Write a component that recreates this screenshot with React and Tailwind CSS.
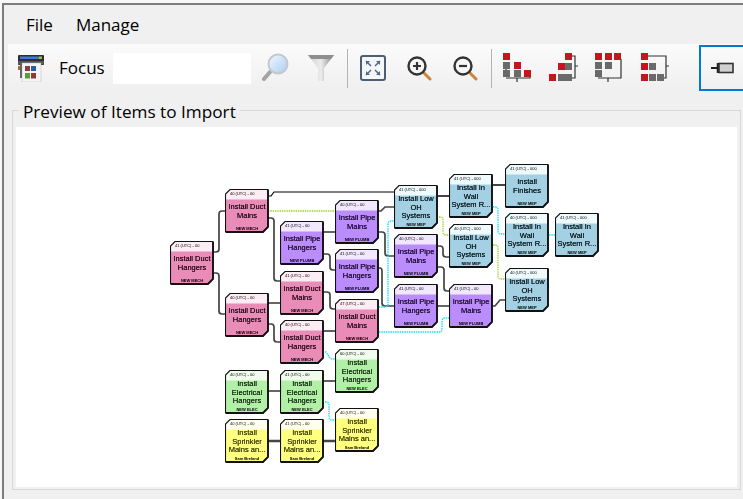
import React from "react";

const F = { fontFamily: '"Open Sans", "Noto Sans", sans-serif' };

const PAL = {
  pink: { body: "#ea8cb8", head: "#fcecf3", foot: "NEW MECH", ink: "#2e0f20" },
  purple: { body: "#bb8cfc", head: "#f1e8fd", foot: "NEW PLUMB", ink: "#231038" },
  blue: { body: "#a3d0e2", head: "#effafd", foot: "NEW MEP", ink: "#111f26" },
  green: { body: "#b2f0a8", head: "#f1fcee", foot: "NEW ELEC", ink: "#1a3016" },
  yellow: { body: "#ffff80", head: "#fffff0", foot: "Sam Breland", ink: "#45450a" },
};

const NODES = [
  [170, 241, "pink", ["Install Duct", "Hangers"], "41 (UTC) - 00"],
  [225, 189, "pink", ["Install Duct", "Mains"], "40 (UTC) - 00"],
  [225, 293, "pink", ["Install Duct", "Hangers"], "40 (UTC) - 00"],
  [280, 221, "purple", ["Install Pipe", "Hangers"], "41 (UTC) - 00"],
  [280, 271, "pink", ["Install Duct", "Mains"], "41 (UTC) - 00"],
  [280, 320, "pink", ["Install Duct", "Hangers"], "40 (UTC) - 00"],
  [335, 200, "purple", ["Install Pipe", "Mains"], "40 (UTC) - 00"],
  [335, 249, "purple", ["Install Pipe", "Hangers"], "41 (UTC) - 00"],
  [335, 299, "pink", ["Install Duct", "Mains"], "47 (UTC) - 00"],
  [394, 185, "blue", ["Install Low", "OH", "Systems"], "41 (UTC) - 000"],
  [394, 234, "purple", ["Install Pipe", "Mains"], "40 (UTC) - 00"],
  [394, 284, "purple", ["Install Pipe", "Hangers"], "41 (UTC) - 00"],
  [449, 174, "blue", ["Install In", "Wall", "System R..."], "41 (UTC) - 000"],
  [449, 224, "blue", ["Install Low", "OH", "Systems"], "40 (UTC) - 000"],
  [449, 284, "purple", ["Install Pipe", "Mains"], "41 (UTC) - 00"],
  [505, 164, "blue", ["Install", "Finishes"], "41 (UTC) - 000"],
  [505, 213, "blue", ["Install In", "Wall", "System R..."], "40 (UTC) - 000"],
  [505, 268, "blue", ["Install Low", "OH", "Systems"], "40 (UTC) - 000"],
  [555, 213, "blue", ["Install In", "Wall", "System R..."], "41 (UTC) - 000"],
  [225, 370, "green", ["Install", "Electrical", "Hangers"], "40 (UTC) - 00"],
  [280, 370, "green", ["Install", "Electrical", "Hangers"], "41 (UTC) - 00"],
  [335, 349, "green", ["Install", "Electrical", "Hangers"], "60 (UTC) - 00"],
  [225, 419, "yellow", ["Install", "Sprinkler", "Mains an..."], "40 (UTC) - 00"],
  [280, 419, "yellow", ["Install", "Sprinkler", "Mains an..."], "41 (UTC) - 00"],
  [335, 408, "yellow", ["Install", "Sprinkler", "Mains an..."], "40 (UTC) - 00"],
];

const G = { stroke: "#444", strokeWidth: 1.7 };
const K = { stroke: "#000", strokeWidth: 1.2 };
const C = { stroke: "#14e4f0", strokeWidth: 1.4, strokeDasharray: "1.5 0.8" };
const Y = { stroke: "#a0d42e", strokeWidth: 1.3, strokeDasharray: "1.5 0.8" };

const WIRES = [
  ["M213 252h3q3 0 3-3v-35q0-3 3-3h3", G],
  ["M213 273h3q3 0 3 3v35q0 3 3 3h3", G],
  ["M268 196h3l3-4h120", K],
  ["M268 211h67", Y],
  ["M268 218h3q3 0 3 3v57q0 3 3 3h3", G],
  ["M324 232h11", K],
  ["M324 254h3q3 0 3 3v10q0 3 3 3h2", G],
  ["M324 292h3q3 0 3 3v11q0 3 3 3h2", G],
  ["M268 303h12", K],
  ["M268 324h3q3 0 3 3v12q0 3 3 3h3", G],
  ["M324 331h11", G],
  ["M325 352h1l4 6q1 1 3 1h2", C],
  ["M323 381h12", G],
  ["M268 391h12", K],
  ["M325 402h1q3 0 3 3v12q0 3 3 3h3", C],
  ["M268 441h12", { ...G, strokeWidth: 2.5 }],
  ["M323 441h12", { ...G, strokeWidth: 2.5 }],
  ["M379 211h2l4-4h9", G],
  ["M379 232h3q3 0 3 3v18q0 3 3 3h6", G],
  ["M379 268h1q2 0 2 3v32q0 3 3 3h9", G],
  ["M379 332h60q3 0 3-3v-8q0-3 3-3h4", C],
  ["M379 307h6q3 0 3-3v-80q0-3 3-3h3", C],
  ["M438 196h11", { ...G, strokeWidth: 2 }],
  ["M439 217h1q3 0 3 3v12q0 3 3 3h3", Y],
  ["M438 246h2q3 0 3 3v5q0 3 3 3h3", G],
  ["M438 267h3q3 0 3 3v18q0 3 3 3h2", G],
  ["M438 306h11", K],
  ["M493 185h12", { ...G, strokeWidth: 2 }],
  ["M493 207h2q3 0 3 3v21q0 3 3 3h4", C],
  ["M493 245h2q3 0 3 3v28q0 3 3 3h4", Y],
  ["M493 306h2l5-6h5", G],
  ["M549 235h6", C],
];

function Node({ x, y, tone, title, id }) {
  const p = PAL[tone];
  return (
    <div
      className="absolute w-[44px] h-[44px]"
      style={{ left: x - 16, top: y - 127 }}
    >
      <svg className="absolute inset-0" width="44" height="44" viewBox="0 0 44 44">
        <polygon points="5,.5 43,.5 43,38 38,43 .5,43 .5,5" fill={p.body} />
        <polygon points="5,.5 43,.5 43,10.5 .5,10.5 .5,5" fill={p.head} />
        <polygon points="5,.5 43,.5 43,38 38,43 .5,43 .5,5" fill="none" stroke="#111" strokeWidth="1.1" />
        <polyline points="43,1 43,38 38,43 1,43" fill="none" stroke="#111" strokeWidth="1.8" />
      </svg>
      <div className="relative flex flex-col h-full items-center">
        <div
          className="h-[10px] w-full pl-[5px] pt-[2px] text-[4px] leading-[5px] whitespace-nowrap text-black"
          style={{ fontFamily: '"Liberation Sans", sans-serif' }}
        >
          {id}
        </div>
        <div
          className="flex-1 flex flex-col items-center justify-center text-[7.5px] leading-[8.7px] whitespace-nowrap [text-shadow:0_0_0.5px_currentColor]"
          style={{ fontFamily: '"Liberation Sans", sans-serif', color: p.ink }}
        >
          {title.map((t, i) => (
            <span key={i}>{t}</span>
          ))}
        </div>
        <div
          className="h-[8px] pt-[1px] text-[4px] leading-[5px] font-bold whitespace-nowrap text-black"
          style={{ fontFamily: '"Liberation Sans", sans-serif' }}
        >
          {p.foot}
        </div>
      </div>
    </div>
  );
}

function Logo() {
  return (
    <svg width="26" height="28" viewBox="0 0 26 28" className="blur-[0.3px]">
      <rect x="0" y="1" width="26" height="10" rx="1" fill="#2e2e2e" />
      <rect x="2" y="2.5" width="19" height="2.5" fill="#3d7ad8" />
      <rect x="21" y="2.5" width="3" height="2.5" fill="#a8c040" />
      <rect x="0" y="7" width="26" height="3" fill="#555" />
      <rect x="4" y="9" width="19" height="19" fill="#f4f4f4" stroke="#bbb" strokeWidth=".5" />
      <rect x="7" y="12" width="5" height="5" fill="#8f3a3a" />
      <rect x="13" y="12" width="5" height="5" fill="#2d5aa0" />
      <rect x="7" y="19" width="5" height="5.5" fill="#5d9a3a" />
      <rect x="13" y="19" width="5" height="5.5" fill="#8f3a3a" />
      <rect x="0" y="12" width="2" height="4" fill="#b06a30" />
      <rect x="2" y="9" width="2" height="15" fill="#666" />
    </svg>
  );
}

function Magnifier() {
  return (
    <svg width="30" height="32" viewBox="0 0 30 32" className="blur-[0.4px]">
      <defs>
        <linearGradient id="mg" x1="0" y1="0" x2="1" y2="1">
          <stop offset="0" stopColor="#f2f8ff" />
          <stop offset="1" stopColor="#a9cdf5" />
        </linearGradient>
      </defs>
      <path d="M9 20L3 27" stroke="#a4a4a4" strokeWidth="4" strokeLinecap="round" />
      <circle cx="17" cy="12" r="9.5" fill="url(#mg)" stroke="#c4c8cc" strokeWidth="2" />
    </svg>
  );
}

function Funnel() {
  return (
    <svg width="28" height="28" viewBox="0 0 28 28" className="blur-[0.4px]">
      <defs>
        <linearGradient id="fg" x1="0" y1="0" x2="1" y2="0">
          <stop offset="0" stopColor="#cfcfcf" />
          <stop offset="0.5" stopColor="#ececec" />
          <stop offset="1" stopColor="#808080" />
        </linearGradient>
      </defs>
      <polygon points="1,1 27,1 17,14 17,27 11,27 11,14" fill="url(#fg)" />
      <polygon points="1,1 27,1 24,5 4,5" fill="#8e8e8e" />
    </svg>
  );
}

function Fit() {
  return (
    <svg width="28" height="28" viewBox="0 0 28 28" className="blur-[0.4px]">
      <rect x="2" y="2" width="24" height="24" rx="2" fill="#f4f6f8" stroke="#4e5f75" strokeWidth="2" />
      <path d="M7 7h4L7 11zM21 7v4l-4-4zM7 21v-4l4 4zM21 21h-4l4-4z" fill="#4e6a88" />
      <path d="M7 7l5 5M21 7l-5 5M7 21l5-5M21 21l-5-5" stroke="#4e6a88" strokeWidth="1.5" />
    </svg>
  );
}

function Zoom({ plus }) {
  return (
    <svg width="26" height="26" viewBox="0 0 26 26" className="blur-[0.3px]">
      <path d="M17 17l7 7" stroke="#c8873a" strokeWidth="3" strokeLinecap="round" />
      <circle cx="11" cy="11" r="8.5" fill="#f6f6f6" stroke="#333" strokeWidth="2.4" />
      <path d={plus ? "M7 11h8M11 7v8" : "M7 11h8"} stroke="#333" strokeWidth="2.2" />
    </svg>
  );
}

function Sq({ x, y, red }) {
  return <rect x={x} y={y} width="7" height="7" fill={red ? "#c4161c" : "#6a6a6a"} />;
}

function LayoutIcon({ squares, line }) {
  return (
    <svg width="30" height="30" viewBox="0 0 30 30" className="blur-[0.2px]">
      <path d={line} fill="none" stroke="#333" strokeWidth="1.2" />
      {squares.map((s, i) => (
        <Sq key={i} x={s[0]} y={s[1]} red={s[2]} />
      ))}
    </svg>
  );
}

function Pin() {
  return (
    <svg width="24" height="16" viewBox="0 0 24 16" className="blur-[0.4px]">
      <path d="M0 8h7" stroke="#222" strokeWidth="2" />
      <path d="M7 3v10" stroke="#222" strokeWidth="2.5" />
      <rect x="8" y="3.5" width="14" height="9" fill="#d0d0d0" stroke="#333" strokeWidth="1.6" />
    </svg>
  );
}

export default function App() {
  return (
    <div className="w-[743px] h-[499px] overflow-hidden bg-[#f7f7f7] pt-[3px] pl-[2px]" style={F}>
      <div className="h-full flex flex-col border-t-2 border-l-2 border-[#7c7c7c] bg-[#f0f0f0]">
        <div className="h-[39px] flex items-center gap-[23px] pl-[22px] text-[17px] text-black shrink-0">
          <span>File</span>
          <span>Manage</span>
        </div>

        <div className="h-[48px] ml-[4px] shrink-0 flex items-center bg-gradient-to-b from-[#fbfbfb] to-[#efefef]">
          <div className="ml-[10px] w-[26px] shrink-0"><Logo /></div>
          <span className="ml-[15px] w-[54px] shrink-0 text-[17px] text-black">Focus</span>
          <div className="w-[138px] h-[31px] shrink-0 bg-white" />
          <div className="ml-[10px] shrink-0"><Magnifier /></div>
          <div className="ml-[16px] shrink-0"><Funnel /></div>
          <div className="ml-[12px] w-px h-[39px] shrink-0 bg-[#b4b4b4]" />
          <div className="ml-[11px] shrink-0"><Fit /></div>
          <div className="ml-[19px] shrink-0"><Zoom plus /></div>
          <div className="ml-[20px] shrink-0"><Zoom /></div>
          <div className="ml-[13px] w-px h-[39px] shrink-0 bg-[#b4b4b4]" />
          <div className="ml-[11px] shrink-0">
            <LayoutIcon
              line="M3 25h24v-2M14 25v4M3 24v-8M14 24v-4"
              squares={[[0, 0, 1], [0, 9, 0], [0, 17, 0], [11, 9, 1], [11, 17, 0], [21, 17, 1]]}
            />
          </div>
          <div className="ml-[16px] shrink-0">
            <LayoutIcon
              line="M22 3h4v22h-4M26 13h3"
              squares={[[16, 0, 1], [9, 10, 1], [16, 10, 0], [0, 21, 1], [9, 21, 0], [16, 21, 0]]}
            />
          </div>
          <div className="ml-[16px] shrink-0">
            <LayoutIcon
              line="M3 25h23V6M13 25v4"
              squares={[[0, 0, 1], [10, 0, 1], [19, 0, 1], [0, 9, 0], [10, 9, 0], [0, 17, 0]]}
            />
          </div>
          <div className="ml-[16px] shrink-0">
            <LayoutIcon
              line="M6 3h19v22h-3M25 13h3"
              squares={[[0, 0, 1], [0, 10, 1], [8, 10, 0], [0, 21, 1], [8, 21, 0], [16, 21, 0]]}
            />
          </div>
          <div className="ml-[28px] w-[46px] h-[46px] shrink-0 border-2 border-[#0078d4] border-r-0 flex items-center pl-[10px]">
            <Pin />
          </div>
        </div>

        <div className="relative flex-1 mt-[18px] ml-[8px] mr-[2px] mb-[9px] border border-[#d8d8d8] pt-[16px] px-[3px] pb-[2px]">
          <span className="absolute left-[6px] -top-[9px] bg-[#f0f0f0] px-[4px] text-[17.2px] leading-[20px] text-black whitespace-nowrap">
            Preview of Items to Import
          </span>
          <div className="relative h-full bg-white overflow-hidden">
            <div className="absolute inset-0 blur-[0.25px]">
              <svg className="absolute inset-0" width="722" height="360" viewBox="16 127 722 360" fill="none">
                {WIRES.map(([d, s], i) => (
                  <path key={i} d={d} {...s} />
                ))}
              </svg>
              {NODES.map(([x, y, tone, title, id], i) => (
                <Node key={i} x={x} y={y} tone={tone} title={title} id={id} />
              ))}
            </div>
          </div>
        </div>
      </div>
    </div>
  );
}
